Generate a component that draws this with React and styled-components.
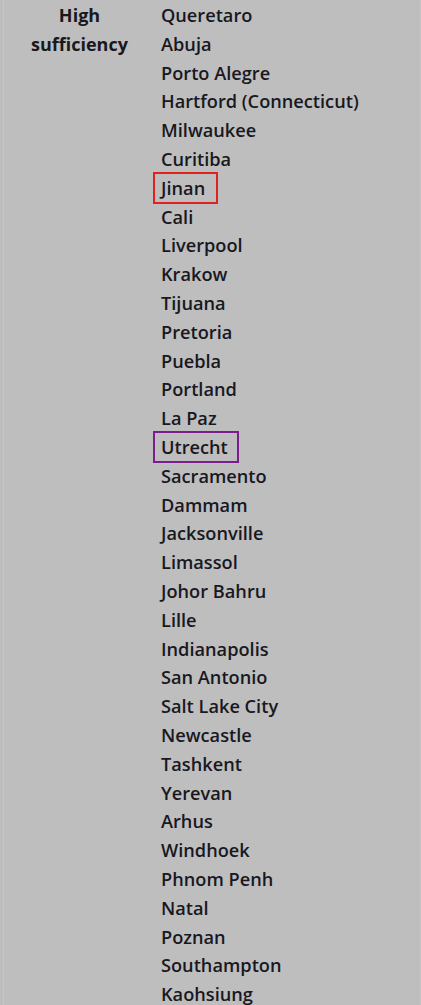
import React from 'react';
import styled, { createGlobalStyle } from 'styled-components';

const GlobalStyle = createGlobalStyle`
  html, body {
    margin: 0;
    padding: 0;
    background: #bebebe;
  }
`;

const cities = [
  'Queretaro', 'Abuja', 'Porto Alegre', 'Hartford (Connecticut)', 'Milwaukee',
  'Curitiba', 'Jinan', 'Cali', 'Liverpool', 'Krakow', 'Tijuana', 'Pretoria',
  'Puebla', 'Portland', 'La Paz', 'Utrecht', 'Sacramento', 'Dammam',
  'Jacksonville', 'Limassol', 'Johor Bahru', 'Lille', 'Indianapolis',
  'San Antonio', 'Salt Lake City', 'Newcastle', 'Tashkent', 'Yerevan', 'Arhus',
  'Windhoek', 'Phnom Penh', 'Natal', 'Poznan', 'Southampton', 'Kaohsiung',
];

const marks = {
  Jinan: { color: '#e0221f', right: 13 },
  Utrecht: { color: '#7b1d8c', right: 11 },
};

const Sheet = styled.div`
  display: grid;
  grid-template-columns: 155px 1fr;
  width: 418px;
  height: 1005px;
  margin-left: 3px;
  box-sizing: border-box;
  overflow: hidden;
  padding-top: 1px;
  border-left: 1px solid #cbc5be;
  border-right: 1px solid #c6c6c6;
  background: #bebebe;
  font-family: 'Open Sans', 'Liberation Sans', sans-serif;
  color: #18181e;
`;

const Heading = styled.div`
  font-weight: 700;
  font-size: 18px;
  line-height: 28.8px;
  text-align: center;
  padding-right: 4px;
`;

const List = styled.ul`
  list-style: none;
  margin: 0;
  padding: 0 0 0 2px;
`;

const Row = styled.li`
  height: 28.8px;
  line-height: 28.8px;
  font-size: 18.2px;
  font-weight: 600;
  white-space: nowrap;
`;

const Mark = styled.span`
  position: relative;
  &::after {
    content: '';
    position: absolute;
    left: -8px;
    right: -${(p) => p.$right}px;
    top: -4px;
    bottom: -4px;
    border: 2px solid ${(p) => p.$color};
  }
`;

export default function App() {
  return (
    <>
      <GlobalStyle />
      <Sheet>
        <Heading>
          High
          <br />
          sufficiency
        </Heading>
        <List>
          {cities.map((c) => (
            <Row key={c}>
              {marks[c] ? (
                <Mark $color={marks[c].color} $right={marks[c].right}>{c}</Mark>
              ) : c}
            </Row>
          ))}
        </List>
      </Sheet>
    </>
  );
}
